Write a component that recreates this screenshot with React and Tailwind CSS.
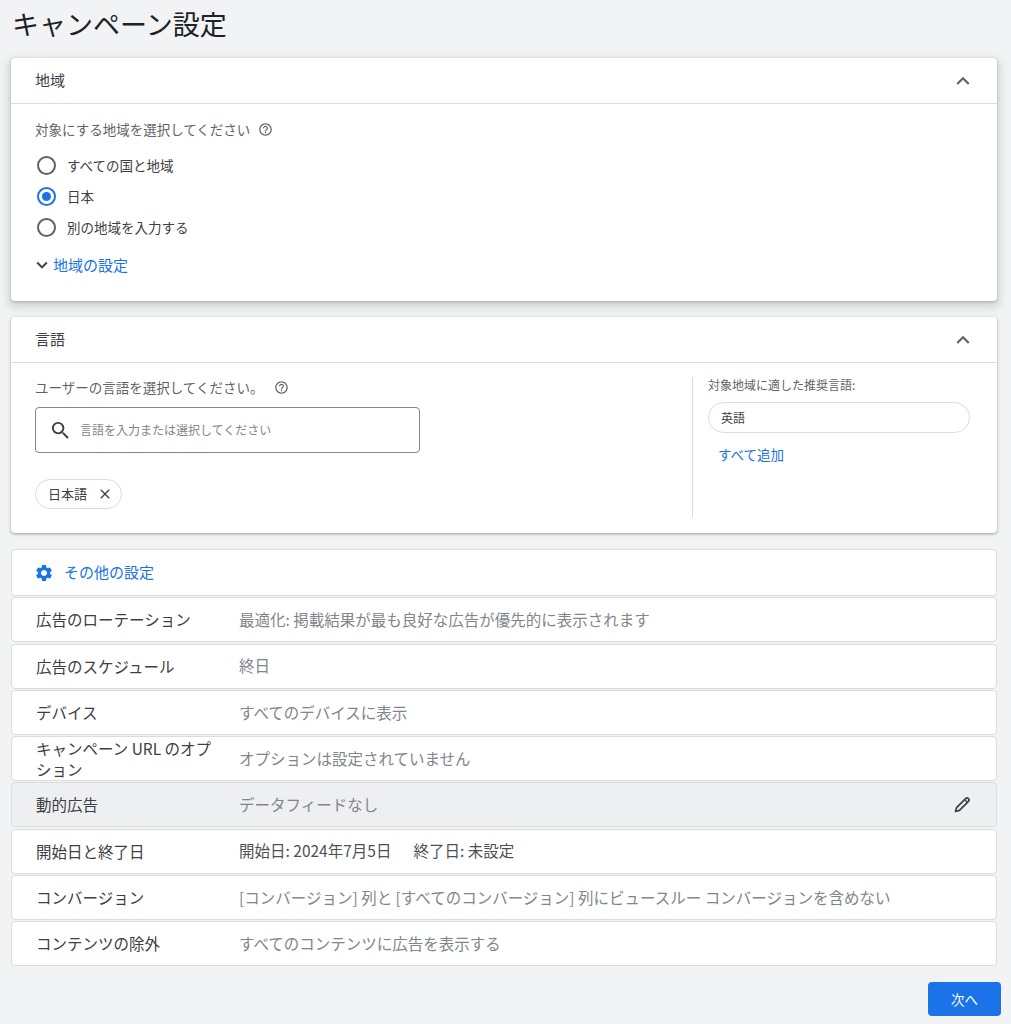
import { MdExpandLess, MdExpandMore, MdHelpOutline, MdSearch, MdClose, MdSettings } from "react-icons/md";

const font = { fontFamily: '"Noto Sans CJK JP", "Noto Sans", Roboto, sans-serif' };

function Radio({ checked, label }) {
  return (
    <label className="flex items-center h-[31px] gap-[11px] pl-[2px]">
      {checked ? (
        <span className="w-[19px] h-[19px] rounded-full border-2 border-[#1a73e8] flex items-center justify-center">
          <span className="w-[9px] h-[9px] rounded-full bg-[#1a73e8]" />
        </span>
      ) : (
        <span className="w-[19px] h-[19px] rounded-full border-2 border-[#5f6368]" />
      )}
      <span className="text-[13.5px] text-[#3c4043]">{label}</span>
    </label>
  );
}

function CardHeader({ title }) {
  return (
    <div className="h-[46px] flex items-center justify-between pl-6 pr-[21px] border-b border-[#dadce0]">
      <span className="text-[15px] text-[#3c4043]">{title}</span>
      <MdExpandLess className="text-[26px] text-[#5f6368]" />
    </div>
  );
}

function Pencil() {
  return (
    <svg width="20" height="20" viewBox="0 0 20 20" fill="none">
      <path
        d="M3.5 16.5 L4.6 12.6 L13.6 3.6 Q15 2.2 16.4 3.6 Q17.8 5 16.4 6.4 L7.4 15.4 Z"
        stroke="#3c4043"
        strokeWidth="1.7"
        strokeLinejoin="round"
      />
      <path d="M12.6 4.6 L15.4 7.4" stroke="#3c4043" strokeWidth="1.4" />
    </svg>
  );
}

const rows = [
  { label: "広告のローテーション", value: "最適化: 掲載結果が最も良好な広告が優先的に表示されます" },
  { label: "広告のスケジュール", value: "終日" },
  { label: "デバイス", value: "すべてのデバイスに表示" },
  { label: "キャンペーン URL のオプション", value: "オプションは設定されていません" },
  { label: "動的広告", value: "データフィードなし", active: true },
  { label: "開始日と終了日", dates: true },
  { label: "コンバージョン", value: "[コンバージョン] 列と [すべてのコンバージョン] 列にビュースルー コンバージョンを含めない" },
  { label: "コンテンツの除外", value: "すべてのコンテンツに広告を表示する" },
];

export default function App() {
  return (
    <div className="min-h-screen bg-[#f1f3f4] pl-[11px] pr-[10px] pb-[7px]" style={font}>
      <h1 className="pt-[6px] pl-px text-[27px] leading-[36px] text-[#202124] mb-[16px]">キャンペーン設定</h1>

      <div className="mr-[4px] flex flex-col gap-4">
        {/* 地域 */}
        <section className="bg-white rounded shadow-[0_1px_3px_rgba(60,64,67,0.3),0_4px_8px_3px_rgba(60,64,67,0.15)]">
          <CardHeader title="地域" />
          <div className="pl-6 pr-6 pt-[15px] pb-[24px]">
            <div className="flex items-center gap-[8px] h-5">
              <span className="text-[13.5px] text-[#5f6368]">対象にする地域を選択してください</span>
              <MdHelpOutline className="text-[15px] text-[#5f6368]" />
            </div>
            <div className="mt-[11px]">
              <Radio label="すべての国と地域" />
              <Radio label="日本" checked />
              <Radio label="別の地域を入力する" />
            </div>
            <div className="mt-[10px] h-6 flex items-center -ml-[4px]">
              <MdExpandMore className="text-[22px] text-[#3c4043]" />
              <span className="text-[15px] text-[#1a73e8]">地域の設定</span>
            </div>
          </div>
        </section>

        {/* 言語 */}
        <section className="bg-white rounded shadow-[0_1px_2px_rgba(60,64,67,0.3),0_1px_3px_1px_rgba(60,64,67,0.15)]">
          <CardHeader title="言語" />
          <div className="flex pt-[14px] pb-[16px]">
            <div className="w-[681px] pl-6 pb-[8px]">
              <div className="flex items-center gap-[11px] h-5">
                <span className="text-[13.5px] text-[#5f6368]">ユーザーの言語を選択してください。</span>
                <MdHelpOutline className="text-[15px] text-[#5f6368]" />
              </div>
              <div className="mt-[10px] w-[385px] h-[46px] border border-[#80868b] rounded flex items-center pl-[13px] gap-[8px]">
                <MdSearch className="text-[23px] text-[#3c4043]" />
                <span className="text-[12px] text-[#80868b]">言語を入力または選択してください</span>
              </div>
              <div className="mt-[26px] inline-flex items-center h-[30px] rounded-full border border-[#dadce0] pl-[12px] pr-[8px] gap-[10px]">
                <span className="text-[13px] text-[#3c4043]">日本語</span>
                <MdClose className="text-[16px] text-[#3c4043]" />
              </div>
            </div>
            <div className="border-l border-[#dadce0] pl-[15px] w-[278px]">
              <div className="text-[12px] leading-[16px] text-[#5f6368]">対象地域に適した推奨言語:</div>
              <div className="mt-[9px] h-[31px] w-[262px] rounded-full border border-[#dadce0] flex items-center pl-[12px] text-[12px] text-[#3c4043]">英語</div>
              <div className="mt-[11px] pl-[10px] text-[13.5px] leading-5 text-[#1a73e8]">すべて追加</div>
            </div>
          </div>
        </section>

        {/* その他の設定 */}
        <section className="flex flex-col gap-[1.25px]">
          <div className="h-[47px] bg-white border border-[#dadce0] rounded flex items-center pl-[22px] gap-[10px]">
            <MdSettings className="text-[20px] text-[#1a73e8]" />
            <span className="text-[15px] text-[#1a73e8]">その他の設定</span>
          </div>
          {rows.map((r) => (
            <div
              key={r.label}
              className={`h-[45px] border border-[#dadce0] rounded flex items-center pl-6 pr-6 ${r.active ? "bg-[#eeeff0]" : "bg-white"}`}
            >
              <div className="w-[203px] pr-[18px] text-[15.5px] leading-[21px] text-[#3c4043]">{r.label}</div>
              <div className="flex-1 text-[15.5px] text-[#80868b]">
                {r.dates ? (
                  <span className="text-[#4d5156]">
                    開始日: 2024年7月5日<span className="ml-[22px]">終了日: 未設定</span>
                  </span>
                ) : (
                  r.value
                )}
              </div>
              {r.active && <Pencil />}
            </div>
          ))}
        </section>
      </div>

      <div className="flex justify-end mt-[16px]">
        <button className="w-[73px] h-[34px] rounded bg-[#1a73e8] text-white text-[13.5px]">次へ</button>
      </div>
    </div>
  );
}
